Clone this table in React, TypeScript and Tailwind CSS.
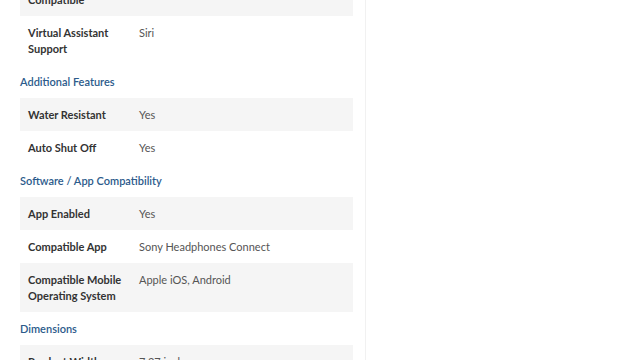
import React from "react";

type Spec = { label: string; value: string };
type Section = { title?: string; rows: Spec[] };

const sections: Section[] = [
  {
    rows: [
      { label: "Voice Assistant Compatible", value: "Yes" },
      { label: "Virtual Assistant Support", value: "Siri" },
    ],
  },
  {
    title: "Additional Features",
    rows: [
      { label: "Water Resistant", value: "Yes" },
      { label: "Auto Shut Off", value: "Yes" },
    ],
  },
  {
    title: "Software / App Compatibility",
    rows: [
      { label: "App Enabled", value: "Yes" },
      { label: "Compatible App", value: "Sony Headphones Connect" },
      { label: "Compatible Mobile Operating System", value: "Apple iOS, Android" },
    ],
  },
  {
    title: "Dimensions",
    rows: [{ label: "Product Width", value: "7.27 inches" }],
  },
];

function SpecRow({ spec, shaded }: { spec: Spec; shaded: boolean }) {
  return (
    <div
      className={`grid grid-cols-[111px_1fr] px-2 pt-[9px] pb-2 leading-[16px] ${
        shaded ? "bg-[#f5f5f5]" : "bg-white"
      }`}
    >
      <div className="pr-3 font-bold text-[#333333]">{spec.label}</div>
      <div className="text-[#555555]">{spec.value}</div>
    </div>
  );
}

export default function App() {
  return (
    <div
      className="h-[360px] w-[640px] overflow-hidden bg-white text-[11px]"
      style={{ fontFamily: "Lato, 'Open Sans', sans-serif" }}
    >
      <div className="flex h-full w-[366px] flex-col border-r border-[#f1f1f1] pl-5 pr-3">
        <div className="mt-[-33px]">
          {sections.map((section, i) => (
            <div key={i}>
              {section.title && (
                <h3 className="py-[8.5px] leading-[16px] font-semibold text-[#2c5b8b]">
                  {section.title}
                </h3>
              )}
              {section.rows.map((spec, j) => (
                <SpecRow key={j} spec={spec} shaded={j % 2 === 0} />
              ))}
            </div>
          ))}
        </div>
      </div>
    </div>
  );
}
